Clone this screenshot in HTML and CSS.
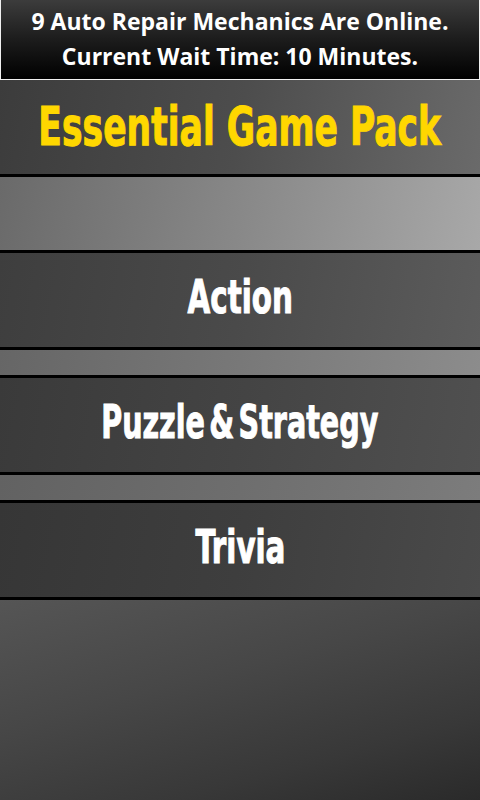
FILE: index.html
```html
<!DOCTYPE html>
<html>
<head>
<meta charset="utf-8">
<link rel="stylesheet" href="styles.css">
</head>
<body>
<div class="screen">
  <div class="banner">
    <div class="banner-line">9 Auto Repair Mechanics Are Online.</div>
    <div class="banner-line">Current Wait Time: 10 Minutes.</div>
  </div>
  <div class="title"><span class="title-text">Essential Game Pack</span></div>
  <div class="band band-large"></div>
  <div class="menu-btn btn-action"><span class="btn-text">Action</span></div>
  <div class="band band-small band-a"></div>
  <div class="menu-btn btn-puzzle"><span class="btn-text btn-text-tight">Puzzle &amp; Strategy</span></div>
  <div class="band band-small band-b"></div>
  <div class="menu-btn btn-trivia"><span class="btn-text">Trivia</span></div>
  <div class="bottom"></div>
</div>
</body>
</html>
```

FILE: styles.css
```css
html, body {
  margin: 0;
  padding: 0;
  background: #333;
}
.screen {
  width: 480px;
  height: 800px;
  display: flex;
  flex-direction: column;
  overflow: hidden;
}
.banner {
  height: 80px;
  box-sizing: border-box;
  border: 1px solid #f0f0f0;
  border-top: none;
  background: linear-gradient(to bottom, #3c3c3c 0%, #1c1c1c 50%, #000 100%);
  display: flex;
  flex-direction: column;
  align-items: center;
  justify-content: center;
  padding-bottom: 2px;
}
.banner-line {
  font-family: "Open Sans", "DejaVu Sans", sans-serif;
  font-weight: 700;
  font-size: 23px;
  line-height: 35px;
  color: #fff;
  white-space: nowrap;
}
.title {
  height: 97px;
  box-sizing: border-box;
  border-bottom: 3px solid #000;
  background: linear-gradient(100deg, #3c3c3c 0%, #4d4d4d 50%, #6a6a6a 100%);
  display: flex;
  align-items: center;
  justify-content: center;
  padding-bottom: 2px;
}
.title-text, .btn-text {
  font-family: "DejaVu Sans Condensed", "DejaVu Sans", sans-serif;
  font-weight: 700;
  display: inline-block;
  white-space: nowrap;
  line-height: 1;
}
.title-text {
  color: #ffd700;
  font-size: 53px;
  -webkit-text-stroke: 1px #ffd700;
  transform: scaleX(0.725);
}
.band {
  flex: none;
}
.band-large {
  height: 73px;
  background: linear-gradient(100deg, #6a6a6a 0%, #888 50%, #a8a8a8 100%);
}
.band-small {
  height: 25px;
}
.band-a {
  background: linear-gradient(100deg, #666 0%, #787878 50%, #8c8c8c 100%);
}
.band-b {
  background: linear-gradient(100deg, #626262 0%, #6e6e6e 50%, #7c7c7c 100%);
}
.menu-btn {
  height: 100px;
  box-sizing: border-box;
  border-top: 3px solid #000;
  border-bottom: 3px solid #000;
  display: flex;
  align-items: center;
  justify-content: center;
  padding-bottom: 6px;
}
.btn-action {
  background: linear-gradient(100deg, #3e3e3e 0%, #4a4a4a 50%, #5c5c5c 100%);
}
.btn-puzzle {
  background: linear-gradient(100deg, #3a3a3a 0%, #444 50%, #505050 100%);
}
.btn-trivia {
  background: linear-gradient(100deg, #363636 0%, #3e3e3e 50%, #4a4a4a 100%);
}
.btn-text {
  color: #fff;
  font-size: 46px;
  -webkit-text-stroke: 1px #fff;
  transform: scaleX(0.71);
}
.btn-text-tight {
  word-spacing: -8px;
  transform: scaleX(0.69);
}
.bottom {
  flex: 1;
  background: linear-gradient(165deg, #555 0%, #474747 40%, #383838 75%, #2a2a2a 100%);
}
```
